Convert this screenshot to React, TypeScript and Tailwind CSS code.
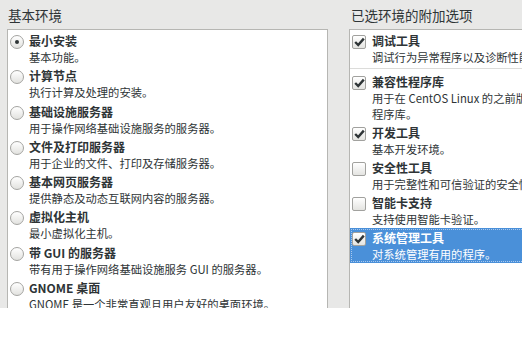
import React from 'react';

const envs = [
  { name: '最小安装', desc: '基本功能。', on: true },
  { name: '计算节点', desc: '执行计算及处理的安装。' },
  { name: '基础设施服务器', desc: '用于操作网络基础设施服务的服务器。' },
  { name: '文件及打印服务器', desc: '用于企业的文件、打印及存储服务器。' },
  { name: '基本网页服务器', desc: '提供静态及动态互联网内容的服务器。' },
  { name: '虚拟化主机', desc: '最小虚拟化主机。' },
  { name: '带 GUI 的服务器', desc: '带有用于操作网络基础设施服务 GUI 的服务器。' },
  { name: 'GNOME 桌面', desc: 'GNOME 是一个非常直观且用户友好的桌面环境。' },
];

const addons = [
  { name: '兼容性程序库', desc: ['用于在 CentOS Linux 的之前版本中构建的应用程序的兼容', '程序库。'], on: true },
  { name: '开发工具', desc: ['基本开发环境。'], on: true },
  { name: '安全性工具', desc: ['用于完整性和可信验证的安全性工具。'] },
  { name: '智能卡支持', desc: ['支持使用智能卡验证。'] },
  { name: '系统管理工具', desc: ['对系统管理有用的程序。'], on: true, sel: true },
];

function Radio({ on }: { on?: boolean }) {
  return (
    <span className="mt-[3px] ml-[2px] w-[14px] h-[14px] shrink-0 rounded-full border border-[#a4a4a1] bg-gradient-to-b from-white to-[#e2e2df] flex items-center justify-center">
      {on && <span className="w-[4px] h-[4px] rounded-full bg-[#2e3436]" />}
    </span>
  );
}

function Check({ on }: { on?: boolean }) {
  return (
    <span className="mt-[3px] ml-[2px] w-[14px] h-[14px] shrink-0 rounded-[2px] border border-[#a1a19e] bg-gradient-to-b from-white to-[#e4e4e1] flex items-center justify-center">
      {on && (
        <svg width="11" height="10" viewBox="0 0 11 10">
          <path d="M1.2 5 L4.2 8 L9.8 1.6" fill="none" stroke="#2e3436" strokeWidth="2.4" />
        </svg>
      )}
    </span>
  );
}

export default function App() {
  return (
    <div
      className="w-[522px] h-[345px] bg-white text-[#2e3436] overflow-hidden"
      style={{ fontFamily: '"Noto Sans CJK SC", "Noto Sans", sans-serif' }}
    >
      <div className="h-[308px] bg-[#e8e8e7] overflow-hidden flex items-start pl-[7px] gap-[21px]">
        {/* left: base environment */}
        <section className="w-[321px] h-[308px] shrink-0 flex flex-col">
          <h2 className="shrink-0 pt-[6px] h-[29px] pl-[1px] text-[13.5px] leading-[18px] font-normal">基本环境</h2>
          <div className="flex-1 min-h-0 bg-white border border-b-0 border-[#b6b6b3] pt-[1px] overflow-hidden">
            {envs.map((e) => (
              <div key={e.name} className="flex gap-[5px] py-[1px] h-[35.3px]">
                <Radio on={e.on} />
                <div className="whitespace-nowrap">
                  <div className="text-[12px] leading-[17px] font-bold">{e.name}</div>
                  <div className="text-[11.3px] leading-[16px]">{e.desc}</div>
                </div>
              </div>
            ))}
          </div>
        </section>

        {/* right: add-ons */}
        <section className="w-[220px] h-[308px] shrink-0 flex flex-col">
          <h2 className="shrink-0 pt-[6px] h-[29px] pl-[2px] text-[13.5px] leading-[18px] font-normal whitespace-nowrap">已选环境的附加选项</h2>
          <div className="flex-1 min-h-0 bg-white border border-r-0 border-b-0 border-[#b6b6b3] pt-[1px] overflow-hidden">
            <div className="flex gap-[6px] py-[1px]">
              <Check on />
              <div className="whitespace-nowrap">
                <div className="text-[12px] leading-[17px] font-bold">调试工具</div>
                <div className="text-[11.3px] leading-[16px]">调试行为异常程序以及诊断性能问题的工具。</div>
              </div>
            </div>
            <div className="mt-[2px] mb-[3px] h-px bg-[#dcdcda]" />
            {addons.map((a) => (
              <div
                key={a.name}
                className={
                  a.sel
                    ? 'flex gap-[6px] py-[1px] bg-[#4a90d9] text-white outline-1 outline-dotted outline-[#a9c9ef] -outline-offset-2'
                    : 'flex gap-[6px] py-[1px]'
                }
              >
                <Check on={a.on} />
                <div className="whitespace-nowrap">
                  <div className="text-[12px] leading-[17px] font-bold">{a.name}</div>
                  {a.desc.map((d) => (
                    <div key={d} className="text-[11.3px] leading-[16px]">{d}</div>
                  ))}
                </div>
              </div>
            ))}
          </div>
        </section>
      </div>
    </div>
  );
}
